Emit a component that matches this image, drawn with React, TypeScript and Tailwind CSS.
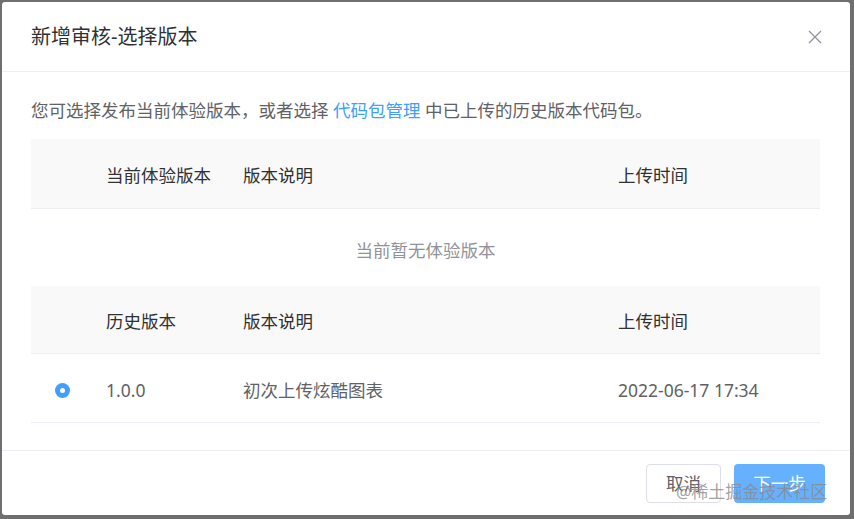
import React from "react";

const font = {
  fontFamily: '"Noto Sans", "Noto Sans CJK SC", sans-serif',
};

function HeaderRow({ first, height }: { first: string; height: string }) {
  return (
    <div
      className={`${height} pt-[4px] flex items-center bg-[#f9f9fa] border-b border-[#ebeef5] text-[17.5px] text-[#303133]`}
    >
      <div className="w-[75px] shrink-0" />
      <div className="w-[137px] shrink-0">{first}</div>
      <div className="w-[375px] shrink-0">版本说明</div>
      <div className="flex-1">上传时间</div>
    </div>
  );
}

export default function App() {
  return (
    <div
      className="relative w-[854px] h-[519px] bg-[#6f6f6f] pt-[2px] pl-[2px] overflow-hidden"
      style={font}
    >
      <div className="w-[848px] h-[513px] bg-white rounded-[3px] flex flex-col">
        {/* header */}
        <div className="h-[70px] shrink-0 flex items-center justify-between pl-[29px] pr-[28px] border-b border-[#ebeef5]">
          <h2 className="text-[20px] text-[#303133] leading-none">新增审核-选择版本</h2>
          <svg width="14" height="14" viewBox="0 0 14 14" className="text-[#909399]">
            <path d="M1 1 L13 13 M13 1 L1 13" stroke="currentColor" strokeWidth="1.3" fill="none" />
          </svg>
        </div>

        {/* body */}
        <div className="flex-1 pl-[29px] pr-[30px] pt-[25px]">
          <p className="text-[17.5px] leading-[26px] text-[#606266] mb-[16px]">
            您可选择发布当前体验版本，或者选择{" "}
            <span className="text-[#409eff]">代码包管理</span> 中已上传的历史版本代码包。
          </p>

          <div className="flex flex-col">
            <HeaderRow first="当前体验版本" height="h-[70px]" />
            <div className="h-[77px] pt-[5px] flex items-center justify-center text-[17.5px] text-[#909399]">
              当前暂无体验版本
            </div>
            <HeaderRow first="历史版本" height="h-[68px]" />
            <div className="h-[69px] pt-[5px] flex items-center border-b border-[#ebeef5] text-[17.5px] text-[#606266]">
              <div className="w-[75px] shrink-0 pl-[24px] flex items-center">
                <span className="w-[15px] h-[15px] rounded-full bg-[#409eff] flex items-center justify-center">
                  <span className="w-[5px] h-[5px] rounded-full bg-white" />
                </span>
              </div>
              <div className="w-[137px] shrink-0">1.0.0</div>
              <div className="w-[375px] shrink-0">初次上传炫酷图表</div>
              <div className="flex-1">2022-06-17 17:34</div>
            </div>
          </div>
        </div>

        {/* footer */}
        <div className="h-[65px] shrink-0 border-t border-[#ebeef5] flex justify-end items-start pt-[13px] pr-[25px] gap-[13px]">
          <button className="w-[75px] h-[39px] rounded-[4px] border border-[#dcdfe6] bg-white text-[17.5px] text-[#606266]">
            取消
          </button>
          <button className="w-[91px] h-[39px] rounded-[4px] bg-[#66b1ff] text-[17.5px] text-white">
            下一步
          </button>
        </div>
      </div>

      <div className="absolute left-[676px] top-[479px] text-[17px] text-[#8a8a8a]/80 pointer-events-none">
        @稀土掘金技术社区
      </div>
    </div>
  );
}
